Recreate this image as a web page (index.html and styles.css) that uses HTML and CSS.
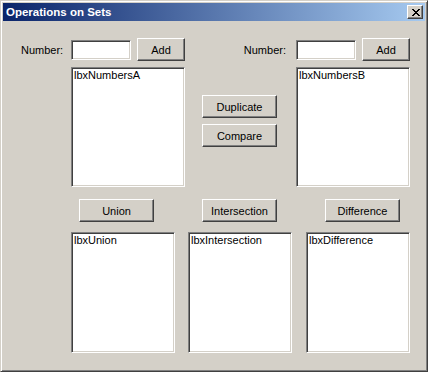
FILE: index.html
```html
<!DOCTYPE html>
<html>
<head>
    <title>Operations on Sets</title>
    <link rel="stylesheet" href="styles.css">
</head>
<body>
    <div class="window">
        <div class="titlebar">
            <span class="title">Operations on Sets</span>
            <button class="close" title="Close">
                <svg width="8" height="7" viewBox="0 0 8 7" shape-rendering="crispEdges">
                    <path fill="#000" d="M0 0h2v1H0zM6 0h2v1H6zM1 1h2v1H1zM5 1h2v1H5zM2 2h4v1H2zM3 3h2v1H3zM2 4h4v1H2zM1 5h2v1H1zM5 5h2v1H5zM0 6h2v1H0zM6 6h2v1H6z"/>
                </svg>
            </button>
        </div>

        <div class="client">
            <div class="sets">
                <label class="num-label label-a" for="txtNumberA">Number:</label>
                <div class="entry entry-a">
                    <input type="text" id="txtNumberA" class="field">
                    <button class="btn add">Add</button>
                </div>
                <label class="num-label label-b" for="txtNumberB">Number:</label>
                <div class="entry entry-b">
                    <input type="text" id="txtNumberB" class="field">
                    <button class="btn add">Add</button>
                </div>

                <div class="listbox list-a">lbxNumbersA</div>
                <div class="actions">
                    <button class="btn">Duplicate</button>
                    <button class="btn">Compare</button>
                </div>
                <div class="listbox list-b">lbxNumbersB</div>
            </div>

            <div class="results">
                <button class="btn op op-union">Union</button>
                <button class="btn op op-intersection">Intersection</button>
                <button class="btn op op-difference">Difference</button>
                <div class="listbox res res-union">lbxUnion</div>
                <div class="listbox res res-intersection">lbxIntersection</div>
                <div class="listbox res res-difference">lbxDifference</div>
            </div>
        </div>
    </div>
</body>
</html>
```

FILE: styles.css
```css
body { margin: 0; background: #d4d0c8; font-family: "Liberation Sans", Arial, sans-serif; font-size: 11px; color: #000; }

/* window frame */
.window {
    box-sizing: border-box;
    width: 428px;
    height: 372px;
    padding: 2px;
    background: #d4d0c8;
    border: 1px solid;
    border-color: #d4d0c8 #404040 #404040 #d4d0c8;
    box-shadow: inset 1px 1px #fff, inset -1px -1px #808080;
    display: flex;
    flex-direction: column;
}
.titlebar {
    height: 18px;
    display: flex;
    align-items: center;
    padding-left: 3px;
    background: linear-gradient(to right, #0a246a, #a6caf0);
}
.title { color: #fff; font-weight: bold; font-size: 11.5px; }
.close {
    box-sizing: border-box;
    width: 16px;
    height: 14px;
    margin: 0 2px 0 auto;
    padding: 0 0 0 1px;
    display: flex;
    align-items: center;
    justify-content: center;
    background: #d4d0c8;
    border: 1px solid;
    border-color: #fff #404040 #404040 #fff;
    box-shadow: inset -1px -1px #808080;
}
.client { flex: 1; }

/* controls */
.btn {
    box-sizing: border-box;
    height: 23px;
    padding: 0;
    font: inherit;
    color: #000;
    background: #d4d0c8;
    border: 1px solid;
    border-color: #fff #404040 #404040 #fff;
    box-shadow: inset -1px -1px #808080;
}
.field {
    box-sizing: border-box;
    width: 60px;
    height: 20px;
    padding: 0 2px;
    font: inherit;
    background: #fff;
    border: 1px solid;
    border-color: #808080 #fff #fff #808080;
    box-shadow: inset 1px 1px #404040, inset -1px -1px #d4d0c8;
    outline: none;
}
.listbox {
    box-sizing: border-box;
    padding: 1px 2px;
    line-height: 13px;
    background: #fff;
    border: 1px solid;
    border-color: #808080 #fff #fff #808080;
    box-shadow: inset 1px 1px #404040, inset -1px -1px #d4d0c8;
}

/* top section: the two sets */
.sets {
    display: grid;
    grid-template-columns: 50px 114px 17px 75px 19px 114px;
    grid-template-rows: 23px 120px;
    row-gap: 6px;
    margin: 17px 0 0 18px;
}
.num-label { align-self: center; }
.label-a { grid-column: 1; }
.label-b { grid-column: 3 / 6; text-align: right; padding-right: 10px; }
.entry { display: flex; align-items: center; gap: 6px; }
.entry-a { grid-column: 2; }
.entry-b { grid-column: 6; }
.add { width: 48px; }
.list-a { grid-column: 2; grid-row: 2; }
.list-b { grid-column: 6; grid-row: 2; }
.actions {
    grid-column: 4;
    grid-row: 2;
    display: flex;
    flex-direction: column;
    gap: 6px;
    padding-top: 28px;
}

/* bottom section: results */
.results {
    display: grid;
    grid-template-columns: 104px 13px 104px 14px 104px;
    grid-template-rows: 23px 121px;
    row-gap: 10px;
    margin: 12px 0 0 68px;
}
.op { width: 75px; grid-row: 1; justify-self: start; }
.op-union { grid-column: 1; margin-left: 8px; }
.op-intersection { grid-column: 3; margin-left: 14px; }
.op-difference { grid-column: 5; margin-left: 19px; }
.res { grid-row: 2; }
.res-union { grid-column: 1; }
.res-intersection { grid-column: 3; }
.res-difference { grid-column: 5; }
```
